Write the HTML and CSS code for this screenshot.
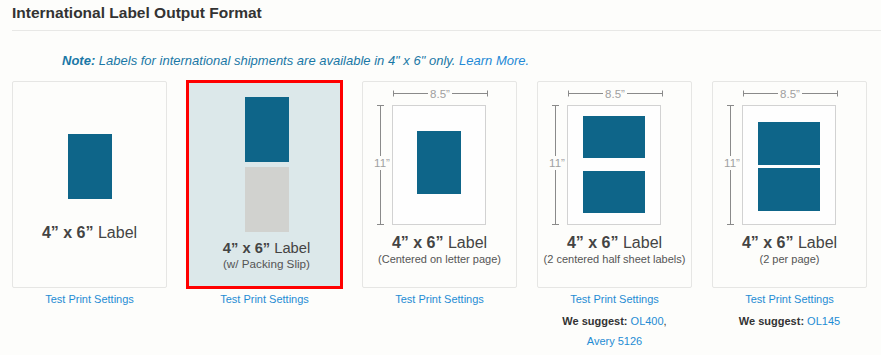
FILE: index.html
```html
<!DOCTYPE html>
<html>
<head>
<meta charset="utf-8">
<link rel="stylesheet" href="styles.css">
</head>
<body>
<div class="page">
  <h2 class="heading">International Label Output Format</h2>
  <div class="divider"></div>
  <p class="note"><b>Note:</b> Labels for international shipments are available in 4" x 6" only. <a class="note-link" href="#">Learn More.</a></p>
  <div class="formats">
    <div class="option">
      <div class="card card-plain">
        <div class="label-block"></div>
        <div class="caption caption-plain"><b>4” x 6”</b> Label</div>
      </div>
      <div class="links"><a href="#">Test Print Settings</a></div>
    </div>

    <div class="option">
      <div class="card card-selected">
        <div class="label-block"></div>
        <div class="slip-block"></div>
        <div class="caption caption-slip"><b>4” x 6”</b> Label</div>
        <div class="sub">(w/ Packing Slip)</div>
      </div>
      <div class="links"><a href="#">Test Print Settings</a></div>
    </div>

    <div class="option">
      <div class="card">
        <svg class="sheet" width="153" height="145" viewBox="0 0 153 145">
          <g stroke="#8a8a8a" stroke-width="1" fill="none">
            <path d="M30.5 11.5H65M89 11.5H124.5M30.5 8.5V14.5M124.5 8.5V14.5"/>
            <path d="M17.5 23.5V74M17.5 88V142.5M14 23.5H21M14 142.5H21"/>
          </g>
          <text x="77" y="15.5" class="dim" text-anchor="middle">8.5”</text>
          <text x="19" y="85" class="dim" text-anchor="middle">11”</text>
          <rect x="29.5" y="23.5" width="93" height="119" fill="#fefefe" stroke="#d2d2d2"/>
          <rect x="54" y="49" width="44" height="63" fill="#0e6589"/>
        </svg>
        <div class="caption"><b>4” x 6”</b> Label</div>
        <div class="sub">(Centered on letter page)</div>
      </div>
      <div class="links"><a href="#">Test Print Settings</a></div>
    </div>

    <div class="option">
      <div class="card">
        <svg class="sheet" width="153" height="145" viewBox="0 0 153 145">
          <g stroke="#8a8a8a" stroke-width="1" fill="none">
            <path d="M30.5 11.5H65M89 11.5H124.5M30.5 8.5V14.5M124.5 8.5V14.5"/>
            <path d="M17.5 23.5V74M17.5 88V142.5M14 23.5H21M14 142.5H21"/>
          </g>
          <text x="77" y="15.5" class="dim" text-anchor="middle">8.5”</text>
          <text x="19" y="85" class="dim" text-anchor="middle">11”</text>
          <rect x="29.5" y="23.5" width="93" height="119" fill="#fefefe" stroke="#d2d2d2"/>
          <rect x="45" y="34" width="62" height="42" fill="#0e6589"/>
          <rect x="45" y="89" width="62" height="42" fill="#0e6589"/>
        </svg>
        <div class="caption"><b>4” x 6”</b> Label</div>
        <div class="sub">(2 centered half sheet labels)</div>
      </div>
      <div class="links">
        <a href="#">Test Print Settings</a>
        <div class="suggest"><b>We suggest:</b> <a href="#">OL400</a>,<br><a href="#">Avery 5126</a></div>
      </div>
    </div>

    <div class="option">
      <div class="card">
        <svg class="sheet" width="153" height="145" viewBox="0 0 153 145">
          <g stroke="#8a8a8a" stroke-width="1" fill="none">
            <path d="M30.5 11.5H65M89 11.5H124.5M30.5 8.5V14.5M124.5 8.5V14.5"/>
            <path d="M17.5 23.5V74M17.5 88V142.5M14 23.5H21M14 142.5H21"/>
          </g>
          <text x="77" y="15.5" class="dim" text-anchor="middle">8.5”</text>
          <text x="19" y="85" class="dim" text-anchor="middle">11”</text>
          <rect x="29.5" y="23.5" width="93" height="119" fill="#fefefe" stroke="#d2d2d2"/>
          <rect x="45" y="40" width="62" height="43" fill="#0e6589"/>
          <rect x="45" y="86" width="62" height="43" fill="#0e6589"/>
        </svg>
        <div class="caption"><b>4” x 6”</b> Label</div>
        <div class="sub">(2 per page)</div>
      </div>
      <div class="links">
        <a href="#">Test Print Settings</a>
        <div class="suggest"><b>We suggest:</b> <a href="#">OL145</a></div>
      </div>
    </div>
  </div>
</div>
</body>
</html>
```

FILE: styles.css
```css
* { box-sizing: border-box; }
html, body { margin: 0; padding: 0; }
body {
  background: #fdfdfb;
  font-family: "Liberation Sans", Arial, sans-serif;
  color: #333;
}
a { color: #1f8cd4; text-decoration: none; }
.page { padding-left: 12px; }
.heading {
  margin: 0;
  padding-top: 4px;
  font-size: 15.5px;
  line-height: 18px;
  font-weight: bold;
  color: #333;
}
.divider {
  margin-top: 8px;
  border-top: 1px solid #e8e8e6;
}
.note {
  margin: 22px 0 0 50px;
  font-size: 13px;
  line-height: 16px;
  font-style: italic;
  color: #1a78a6;
}
.note-link { color: #2389d6; }
.formats {
  margin-top: 12px;
  display: grid;
  grid-template-columns: repeat(5, 155px);
  column-gap: 20px;
}
.option {
  display: flex;
  flex-direction: column;
  align-items: center;
}
.card {
  width: 155px;
  height: 207px;
  border: 1px solid #e6e6e4;
  border-radius: 2px;
  background: #fdfdfb;
  display: flex;
  flex-direction: column;
  align-items: center;
}
.card-selected {
  width: 157px;
  height: 209px;
  margin: -1px;
  border: 3px solid #ff0000;
  border-radius: 0;
  background: #dce8ea;
  padding-top: 14px;
  padding-left: 4px;
}
.card-plain { padding-top: 52px; }
.label-block {
  width: 44px;
  height: 65px;
  background: #0e6589;
  flex: none;
}
.slip-block {
  width: 44px;
  height: 65px;
  margin-top: 5px;
  background: #d1d2cf;
  flex: none;
}
.sheet { display: block; flex: none; }
.dim {
  font-family: "Liberation Sans", Arial, sans-serif;
  font-size: 11.5px;
  fill: #a0a0a0;
}
.caption {
  margin-top: 7px;
  font-size: 16px;
  line-height: 18px;
  color: #444;
  white-space: nowrap;
}
.caption-plain { margin-top: 25px; }
.card-selected .caption {
  margin-top: 8px;
  font-size: 14.7px;
  line-height: 17px;
}
.caption b { font-weight: bold; }
.sub {
  font-size: 11px;
  line-height: 14px;
  color: #555;
  white-space: nowrap;
}
.card-selected .sub { font-size: 11.7px; line-height: 14px; }
.links {
  width: 155px;
  margin-top: 1px;
  text-align: center;
  font-size: 11px;
  line-height: 20px;
}
.links > a { display: block; }
.suggest {
  margin-top: 2px;
  color: #333;
}
.suggest b { font-weight: bold; color: #333; }
```
